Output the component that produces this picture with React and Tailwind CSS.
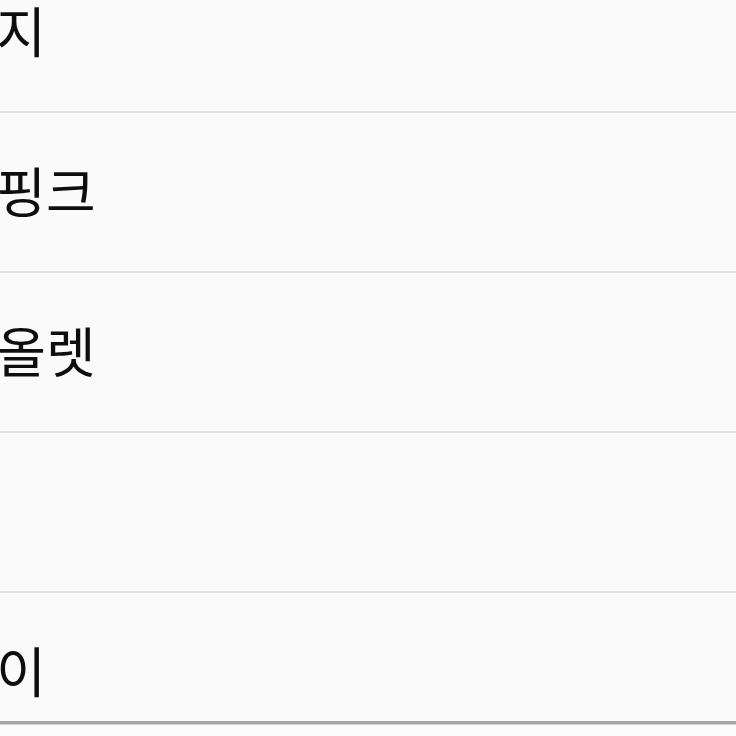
export default function App() {
  const items = ["베이지", "인디핑크", "바이올렛", "블랙", "그레이"];
  return (
    <div
      className="relative h-[736px] w-[736px] overflow-hidden bg-[#fafafa]"
      style={{ fontFamily: '"Noto Sans CJK KR", "Noto Sans", sans-serif' }}
    >
      <div className="-mt-[47px] -ml-[103px] flex flex-col">
        {items.map((t, i) => (
          <div
            key={i}
            className="flex h-[160px] shrink-0 items-center border-b-2 border-[#e0e0e0] pb-[4px]"
          >
            <span className="text-[54px] leading-none text-[#0e0e0e]">{t}</span>
          </div>
        ))}
      </div>
      <div className="absolute bottom-0 left-0 right-0 h-[15px] border-t-[3px] border-[#a6a6a6] bg-[#fcfcfc]">
        <div className="h-px bg-[#cfcfcf]" />
      </div>
    </div>
  );
}
